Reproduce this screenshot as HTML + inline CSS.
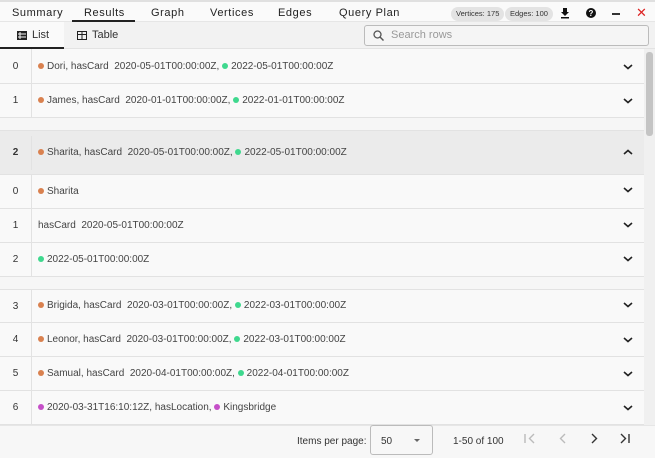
<!DOCTYPE html>
<html><head><style>
*{box-sizing:border-box;margin:0;padding:0}
body{width:655px;height:458px;overflow:hidden;background:#f7f7f7;font-family:"Liberation Sans",sans-serif;font-size:11px;color:#333;position:relative}
.abs{position:absolute}
.top{left:0;top:0;width:655px;height:22px;background:#fafafa;border-top:2px solid #e0e0e0;border-bottom:1px solid #e6e6e6}
.tab{position:absolute;top:5px;font-size:11px;letter-spacing:.6px;color:#222}
.pill{position:absolute;top:5px;height:14px;border-radius:7px;background:#e3e3e3;font-size:7.5px;line-height:14px;padding:0 5px;color:#333}
.sub{left:0;top:22px;width:655px;height:27px;background:#f2f2f2;border-bottom:1px solid #e3e3e3}
.row{position:absolute;left:0;width:644px;border-bottom:1px solid #e2e2e2;background:#f9f9f9}
.row .i{position:absolute;left:0;width:32px;text-align:center;color:#333;font-size:10px;height:100%;border-right:1px solid #e2e2e2}
.row .t{position:absolute;left:38px;font-size:10px;color:#444;white-space:pre}
.d{display:inline-block;width:6px;height:6px;border-radius:3px;margin-right:3px;vertical-align:0px}
.o{background:#d9814f}.g{background:#3fd88e}.p{background:#c54fc8}
.gap{position:absolute;left:0;width:644px;background:#f6f6f6;border-bottom:1px solid #e2e2e2}
</style></head><body>
<div class="abs top">
<span class="tab" style="left:12px">Summary</span>
<span class="tab" style="left:84px">Results</span>
<div class="abs" style="left:72px;top:18px;width:63px;height:2px;background:#222"></div>
<span class="tab" style="left:151px">Graph</span>
<span class="tab" style="left:210px">Vertices</span>
<span class="tab" style="left:278px">Edges</span>
<span class="tab" style="left:339px">Query Plan</span>
<span class="pill" style="left:451px">Vertices: 175</span>
<span class="pill" style="left:505px">Edges: 100</span>
<svg class="abs" style="left:559px;top:5px" width="12" height="12" viewBox="0 0 12 12"><path d="M4 1h4v4h2L6 9 2 5h2z M2 10h8v1.5H2z" fill="#111"/></svg>
<svg class="abs" style="left:585px;top:5px" width="12" height="12" viewBox="0 0 12 12"><circle cx="6" cy="6" r="5" fill="#111"/><text x="6" y="9" font-size="8" font-weight="bold" text-anchor="middle" fill="#fff" font-family="Liberation Sans">?</text></svg>
<div class="abs" style="left:612px;top:11px;width:8px;height:1.5px;background:#333"></div>
<span class="abs" style="left:636px;top:3px;color:#d22;font-size:13px">✕</span>
</div>
<div class="abs sub">
<div class="abs" style="left:0;top:0;width:64px;height:27px;background:#fafafa;border-bottom:2px solid #222"></div>
<svg class="abs" style="left:17px;top:9px" width="10" height="9" viewBox="0 0 10 9"><rect x="0" y="0" width="10" height="9" fill="#222"/><path d="M1 3h8M1 6h8M3 1v7" stroke="#fafafa" stroke-width="1"/></svg>
<span class="abs" style="left:32px;top:7px;font-size:11px">List</span>
<svg class="abs" style="left:77px;top:9px" width="10" height="9" viewBox="0 0 10 9"><rect x=".5" y=".5" width="9" height="8" fill="none" stroke="#222"/><path d="M1 3.5h8M5 1v7" stroke="#222"/></svg>
<span class="abs" style="left:92px;top:7px;font-size:11px">Table</span>
<div class="abs" style="left:364px;top:3px;width:285px;height:21px;border:1px solid #bbb;border-radius:3px;background:#f5f5f5"></div>
<svg class="abs" style="left:373px;top:8px" width="11" height="11" viewBox="0 0 11 11"><circle cx="4.5" cy="4.5" r="3.5" fill="none" stroke="#555" stroke-width="1.3"/><path d="M7 7l3.5 3.5" stroke="#555" stroke-width="1.5"/></svg>
<span class="abs" style="left:391px;top:7px;color:#999;font-size:11px">Search rows</span>
</div>

<div class="row" style="top:49px;height:35px"><span class="i" style="line-height:35px">0</span><span class="t" style="top:12px"><span class="d o"></span>Dori, hasCard  2020-05-01T00:00:00Z, <span class="d g"></span>2022-05-01T00:00:00Z</span></div>
<div class="row" style="top:84px;height:34px"><span class="i" style="line-height:34px">1</span><span class="t" style="top:11px"><span class="d o"></span>James, hasCard  2020-01-01T00:00:00Z, <span class="d g"></span>2022-01-01T00:00:00Z</span></div>
<div class="gap" style="top:118px;height:13px"></div>
<div class="row" style="top:131px;height:44px;background:#ebebeb"><span class="i" style="line-height:34px;height:34px;top:5px;font-weight:bold">2</span><span class="t" style="top:16px"><span class="d o"></span>Sharita, hasCard  2020-05-01T00:00:00Z, <span class="d g"></span>2022-05-01T00:00:00Z</span></div>
<div class="row" style="top:175px;height:34px"><span class="i" style="line-height:34px">0</span><span class="t" style="top:11px"><span class="d o"></span>Sharita</span></div>
<div class="row" style="top:209px;height:34px"><span class="i" style="line-height:34px">1</span><span class="t" style="top:11px">hasCard  2020-05-01T00:00:00Z</span></div>
<div class="row" style="top:243px;height:34px"><span class="i" style="line-height:34px">2</span><span class="t" style="top:11px"><span class="d g"></span>2022-05-01T00:00:00Z</span></div>
<div class="gap" style="top:277px;height:13px"></div>
<div class="row" style="top:290px;height:33px"><span class="i" style="line-height:33px">3</span><span class="t" style="top:10px"><span class="d o"></span>Brigida, hasCard  2020-03-01T00:00:00Z, <span class="d g"></span>2022-03-01T00:00:00Z</span></div>
<div class="row" style="top:323px;height:34px"><span class="i" style="line-height:34px">4</span><span class="t" style="top:11px"><span class="d o"></span>Leonor, hasCard  2020-03-01T00:00:00Z, <span class="d g"></span>2022-03-01T00:00:00Z</span></div>
<div class="row" style="top:357px;height:34px"><span class="i" style="line-height:34px">5</span><span class="t" style="top:11px"><span class="d o"></span>Samual, hasCard  2020-04-01T00:00:00Z, <span class="d g"></span>2022-04-01T00:00:00Z</span></div>
<div class="row" style="top:391px;height:34px"><span class="i" style="line-height:34px">6</span><span class="t" style="top:11px"><span class="d p"></span>2020-03-31T16:10:12Z, hasLocation, <span class="d p"></span>Kingsbridge</span></div>

<svg class="abs" style="left:0;top:0" width="655" height="458">
<g fill="none" stroke="#222" stroke-width="1.6">
<path d="M624 65l4 3.5 4-3.5M624 99l4 3.5 4-3.5M624 154l4-3.5 4 3.5M624 188l4 3.5 4-3.5M624 223l4 3.5 4-3.5M624 257l4 3.5 4-3.5M624 303l4 3.5 4-3.5M624 338l4 3.5 4-3.5M624 372l4 3.5 4-3.5M624 406l4 3.5 4-3.5"/>
</g></svg>
<div class="abs" style="left:644px;top:49px;width:11px;height:376px;background:#f0f0f0"></div>
<div class="abs" style="left:646px;top:52px;width:7px;height:84px;background:#c4c4c4;border-radius:3px"></div>

<div class="abs" style="left:0;top:425px;width:655px;height:33px;background:#f7f7f7;border-top:1px solid #e6e6e6">
<span class="abs" style="left:297px;top:10px;font-size:10px">Items per page:</span>
<div class="abs" style="left:370px;top:-1px;width:63px;height:30px;border:1px solid #bbb;border-radius:3px"></div>
<span class="abs" style="left:381px;top:10px;font-size:10px">50</span>
<div class="abs" style="left:414px;top:13px;width:0;height:0;border-left:3px solid transparent;border-right:3px solid transparent;border-top:3px solid #666"></div>
<span class="abs" style="left:453px;top:10px;font-size:10px">1-50 of 100</span>
<svg class="abs" style="left:520px;top:0" width="135" height="30"><g fill="none" stroke-width="1.4"><path d="M525 8v9M534 8l-4.5 4.5 4.5 4.5" stroke="#bbb" transform="translate(-520,0)"/><path d="M565 8l-4.5 4.5 4.5 4.5" stroke="#bbb" transform="translate(-520,0)"/><path d="M592 8l4.5 4.5-4.5 4.5" stroke="#333" transform="translate(-520,0)"/><path d="M621 8l4.5 4.5-4.5 4.5M629 8v9" stroke="#333" transform="translate(-520,0)"/></g></svg>
</div>
</body></html>
